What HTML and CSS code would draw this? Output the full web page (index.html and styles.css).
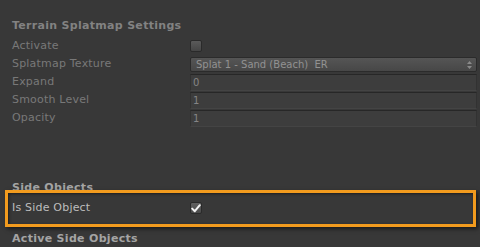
FILE: index.html
```html
<!DOCTYPE html>
<html>
<head>
<meta charset="utf-8">
<link rel="stylesheet" href="styles.css">
</head>
<body>
<div class="panel">
  <div class="header dim">Terrain Splatmap Settings</div>
  <div class="section">
    <div class="row">
      <div class="label">Activate</div>
      <div class="control"><span class="checkbox"></span></div>
    </div>
    <div class="row">
      <div class="label">Splatmap Texture</div>
      <div class="control">
        <div class="dropdown">
          <span class="dd-text">Splat 1 - Sand (Beach)&nbsp; ER</span>
          <svg class="dd-arrows" width="5" height="8" viewBox="0 0 5 8"><path d="M2.5 0 L5 3 H0 Z M0 5 H5 L2.5 8 Z" fill="#8a8a8a"/></svg>
        </div>
      </div>
    </div>
    <div class="row">
      <div class="label">Expand</div>
      <div class="control"><div class="field">0</div></div>
    </div>
    <div class="row">
      <div class="label">Smooth Level</div>
      <div class="control"><div class="field">1</div></div>
    </div>
    <div class="row">
      <div class="label">Opacity</div>
      <div class="control"><div class="field">1</div></div>
    </div>
  </div>

  <div class="header bright side-header">Side Objects</div>
  <div class="row highlighted">
    <div class="label light">Is Side Object</div>
    <div class="control">
      <span class="checkbox checked">
        <svg width="10" height="9" viewBox="0 0 10 9"><path d="M1.2 4.6 L3.8 7.2 L8.8 1.2" fill="none" stroke="#f2f2f2" stroke-width="2" stroke-linecap="round" stroke-linejoin="round"/></svg>
      </span>
    </div>
    <div class="highlight"></div>
  </div>
  <div class="header bright active-header">Active Side Objects</div>
</div>
</body>
</html>
```

FILE: styles.css
```css
html, body {
  margin: 0;
  padding: 0;
  background: #383838;
  width: 480px;
  height: 247px;
  overflow: hidden;
}

.panel {
  font-family: "DejaVu Sans", Verdana, sans-serif;
  font-size: 11px;
  padding: 17px 3px 0 12px;
  display: flex;
  flex-direction: column;
}

.header {
  font-weight: bold;
  height: 18px;
  line-height: 18px;
  white-space: nowrap;
  letter-spacing: 0.3px;
}

.header.dim { color: #828282; margin-bottom: 2px; }
.header.bright { color: #a4a4a4; }

.side-header { margin-top: 52px; margin-bottom: 2px; }
.active-header { margin-top: 13px; }

.section {
  display: flex;
  flex-direction: column;
}

.row {
  display: flex;
  height: 18px;
  line-height: 18px;
  align-items: center;
}

.label {
  width: 178px;
  color: #787878;
  white-space: nowrap;
  flex: none;
  letter-spacing: 0.2px;
}

.label.light { color: #bdbdbd; }

.control {
  flex: 1;
  display: flex;
  align-items: center;
  height: 18px;
}

.checkbox {
  box-sizing: border-box;
  width: 12px;
  height: 12px;
  border-radius: 2px;
  border: 1px solid #2a2a2a;
  background: linear-gradient(#5a5a5a, #454545);
  display: flex;
  align-items: center;
  justify-content: center;
}

.checkbox.checked {
  background: linear-gradient(#606060, #4a4a4a);
}

.dropdown {
  box-sizing: border-box;
  flex: 1;
  height: 15px;
  margin-top: 1px;
  border: 1px solid #2b2b2b;
  border-radius: 2px;
  background: linear-gradient(#555555, #474747);
  display: flex;
  align-items: center;
  justify-content: space-between;
  padding: 0 4px 0 5px;
  font-size: 10px;
  color: #929292;
  line-height: 13px;
}

.dd-text { white-space: pre; }

.field {
  box-sizing: border-box;
  flex: 1;
  height: 17px;
  margin-top: 1px;
  border: 1px solid #323232;
  border-top-color: #272727;
  border-bottom-color: #444444;
  background: #3d3d3d;
  font-size: 10px;
  line-height: 15px;
  padding-left: 2px;
  color: #858585;
}

.highlighted {
  position: relative;
}

.highlight {
  position: absolute;
  left: -7px;
  right: 1px;
  top: -9px;
  bottom: -10px;
  border: 3px solid #f29b1e;
  box-shadow: 2px 2px 4px rgba(0, 0, 0, 0.55), inset 1px 1px 3px rgba(0, 0, 0, 0.5);
  pointer-events: none;
}
```
